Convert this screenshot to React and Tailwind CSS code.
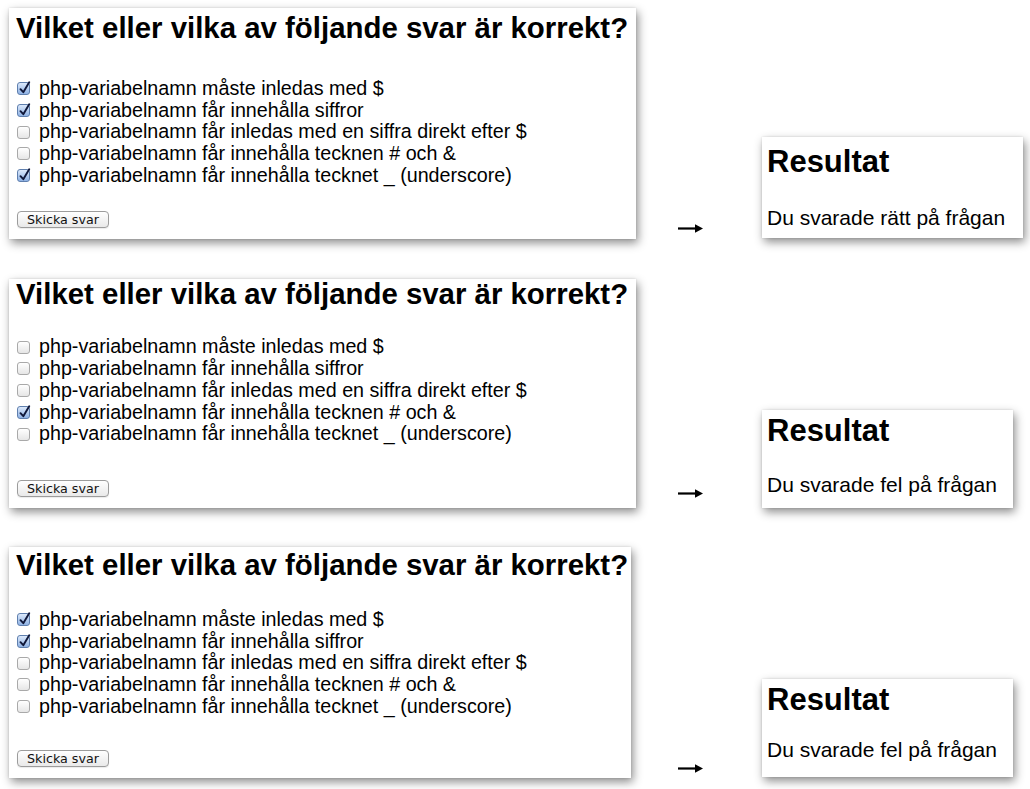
import React from "react";

const OPTIONS = [
  "php-variabelnamn måste inledas med $",
  "php-variabelnamn får innehålla siffror",
  "php-variabelnamn får inledas med en siffra direkt efter $",
  "php-variabelnamn får innehålla tecknen # och &",
  "php-variabelnamn får innehålla tecknet _ (underscore)",
];

function Box({ checked }) {
  if (checked) {
    return (
      <span className="relative inline-block w-[13px] h-[13px] shrink-0 rounded-[3px] border border-[#5f7fae] bg-gradient-to-b from-[#dce9fb] to-[#8fb2e4]">
        <svg className="absolute left-[1px] top-[-2px]" width="12" height="14" viewBox="0 0 12 14">
          <path d="M1.5 8.2 L4.3 11.2 L10.2 1.2" fill="none" stroke="#10183a" strokeWidth="1.9" strokeLinecap="round" strokeLinejoin="round" />
        </svg>
      </span>
    );
  }
  return (
    <span className="inline-block w-[13px] h-[13px] shrink-0 rounded-[3px] border border-[#a9a9a9] bg-gradient-to-b from-[#ffffff] to-[#e6e6e6]" />
  );
}

function Panel({ checks, wClass, ptClass, rowsClass, btnClass, pbClass }) {
  return (
    <div className={`${wClass} ${ptClass} ${pbClass} shrink-0 bg-white shadow-[2px_4px_9px_rgba(0,0,0,0.45),0_0_2px_rgba(0,0,0,0.12)] font-['Liberation_Sans',Arial,sans-serif] text-black`}>
      <h1 className="pl-[7px] text-[29.4px] leading-[29px] font-bold whitespace-nowrap">
        Vilket eller vilka av följande svar är korrekt?
      </h1>
      <div className={`${rowsClass} flex flex-col`}>
        {OPTIONS.map((o, i) => (
          <div key={i} className="flex items-center h-[21.7px] pl-[8px]">
            <Box checked={checks[i]} />
            <span className="ml-[9px] text-[19.7px] leading-[21.7px] whitespace-nowrap">{o}</span>
          </div>
        ))}
      </div>
      <div className={`${btnClass} flex pl-[8px]`}>
        <button className="w-[92px] h-[17px] rounded-[4px] border border-[#9c9c9c] bg-gradient-to-b from-[#ffffff] to-[#e9e9e9] font-['DejaVu_Sans',sans-serif] text-[12.7px] leading-[15px] text-[#111] text-left pl-[9px] shadow-[0_1px_1px_rgba(0,0,0,0.08)]">
          Skicka svar
        </button>
      </div>
    </div>
  );
}

function Arrow({ mbClass, mlClass }) {
  return (
    <div className={`${mbClass} ${mlClass} w-[25px] shrink-0 flex`}>
      <svg width="25" height="9" viewBox="0 0 25 9">
        <rect x="0" y="3.4" width="19" height="2.2" fill="#000" />
        <path d="M17 0.3 L25 4.5 L17 8.7 Z" fill="#000" />
      </svg>
    </div>
  );
}

function Card({ text, wClass, hClass, mbClass, ptClass, gapClass, mlClass }) {
  return (
    <div className={`${wClass} ${hClass} ${mbClass} ${ptClass} ${mlClass} shrink-0 bg-white px-[5px] shadow-[2px_4px_9px_rgba(0,0,0,0.45),0_0_2px_rgba(0,0,0,0.12)] font-['Liberation_Sans',Arial,sans-serif] text-black`}>
      <div className="text-[31px] leading-[36px] font-bold">Resultat</div>
      <div className={`${gapClass} text-[21px] leading-[24px] whitespace-nowrap`}>{text}</div>
    </div>
  );
}

export default function App() {
  return (
    <div className="w-[1030px] h-[789px] bg-white overflow-hidden pl-[9px] pt-[8px] flex flex-col">
      <div className="flex items-end">
        <Panel
          checks={[true, true, false, false, true]}
          wClass="w-[627px]"
          ptClass="pt-[5px]"
          rowsClass="mt-[36px]"
          btnClass="mt-[25px]"
          pbClass="pb-[11px]"
        />
        <Arrow mbClass="mb-[6px]" mlClass="ml-[42px]" />
        <Card
          text="Du svarade rätt på frågan"
          wClass="w-[261px]"
          hClass="h-[101px]"
          mbClass="mb-[1px]"
          ptClass="pt-[7px]"
          gapClass="mt-[26px]"
          mlClass="ml-[59px]"
        />
      </div>
      <div className="flex items-end mt-[40px]">
        <Panel
          checks={[false, false, false, true, false]}
          wClass="w-[627px]"
          ptClass="pt-0"
          rowsClass="mt-[28px]"
          btnClass="mt-[35px]"
          pbClass="pb-[11px]"
        />
        <Arrow mbClass="mb-[10px]" mlClass="ml-[42px]" />
        <Card
          text="Du svarade fel på frågan"
          wClass="w-[251px]"
          hClass="h-[98px]"
          mbClass="mb-0"
          ptClass="pt-[3px]"
          gapClass="mt-[24px]"
          mlClass="ml-[59px]"
        />
      </div>
      <div className="flex items-end mt-[39px]">
        <Panel
          checks={[true, true, false, false, false]}
          wClass="w-[622px]"
          ptClass="pt-[3px]"
          rowsClass="mt-[30px]"
          btnClass="mt-[33px]"
          pbClass="pb-[11px]"
        />
        <Arrow mbClass="mb-[5px]" mlClass="ml-[47px]" />
        <Card
          text="Du svarade fel på frågan"
          wClass="w-[251px]"
          hClass="h-[98px]"
          mbClass="mb-[1px]"
          ptClass="pt-[3px]"
          gapClass="mt-[20px]"
          mlClass="ml-[59px]"
        />
      </div>
    </div>
  );
}
